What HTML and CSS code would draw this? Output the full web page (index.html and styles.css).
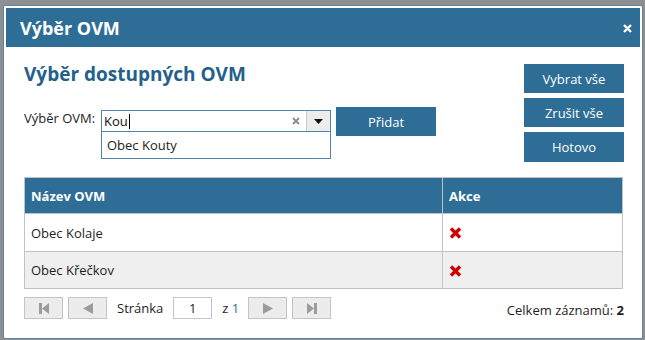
FILE: index.html
```html
<!DOCTYPE html>
<html lang="cs">
<head>
<meta charset="utf-8">
<title>Výběr OVM</title>
<link rel="stylesheet" href="styles.css">
</head>
<body>
<div class="dialog">
  <div class="titlebar">
    <span class="title">Výběr OVM</span>
    <svg class="close" width="9" height="9" viewBox="0 0 9 9"><path d="M1 1L8 8M8 1L1 8" stroke="#fff" stroke-width="2.4"/></svg>
  </div>
  <div class="content">
    <div class="top">
      <div class="left">
        <h2 class="heading">Výběr dostupných OVM</h2>
        <div class="formrow">
          <label class="label">Výběr OVM:</label>
          <div class="combo">
            <div class="combo-input">
              <span class="value">Kou<span class="caret-cursor"></span></span>
              <svg class="clear" width="8" height="8" viewBox="0 0 8 8"><path d="M1 1L7 7M7 1L1 7" stroke="#8a8a8a" stroke-width="1.8"/></svg>
              <span class="arrow"><svg width="9" height="5" viewBox="0 0 9 5"><path d="M0 0H9L4.5 5Z" fill="#111"/></svg></span>
            </div>
            <div class="dropdown">Obec Kouty</div>
          </div>
          <button class="btn add">Přidat</button>
        </div>
      </div>
      <div class="actions">
        <button class="btn">Vybrat vše</button>
        <button class="btn">Zrušit vše</button>
        <button class="btn">Hotovo</button>
      </div>
    </div>
    <table class="grid">
      <thead>
        <tr><th class="c-name">Název OVM</th><th class="c-act">Akce</th></tr>
      </thead>
      <tbody>
        <tr><td>Obec Kolaje</td><td><svg class="del" width="13" height="12" viewBox="0 0 13 12"><path d="M2 1.5L11 10.5M11 1.5L2 10.5" stroke="#d10000" stroke-width="3.4"/></svg></td></tr>
        <tr class="alt"><td>Obec Křečkov</td><td><svg class="del" width="13" height="12" viewBox="0 0 13 12"><path d="M2 1.5L11 10.5M11 1.5L2 10.5" stroke="#d10000" stroke-width="3.4"/></svg></td></tr>
      </tbody>
    </table>
    <div class="pager">
      <div class="pages">
        <span class="pbtn"><svg width="10" height="11" viewBox="0 0 10 11"><rect x="0" y="0" width="3" height="11" fill="#9c9c9c"/><path d="M10 0V11L3 5.5Z" fill="#9c9c9c"/></svg></span>
        <span class="pbtn"><svg width="10" height="11" viewBox="0 0 10 11"><path d="M10 0V11L0 5.5Z" fill="#9c9c9c"/></svg></span>
        <span class="ptext p-label">Stránka</span>
        <span class="pinput">1</span>
        <span class="ptext p-of">z <span class="link">1</span></span>
        <span class="pbtn"><svg width="10" height="11" viewBox="0 0 10 11"><path d="M0 0V11L10 5.5Z" fill="#9c9c9c"/></svg></span>
        <span class="pbtn"><svg width="10" height="11" viewBox="0 0 10 11"><path d="M0 0V11L7 5.5Z" fill="#9c9c9c"/><rect x="7" y="0" width="3" height="11" fill="#9c9c9c"/></svg></span>
      </div>
      <div class="total">Celkem záznamů: <b>2</b></div>
    </div>
  </div>
</div>
</body>
</html>
```
FILE: styles.css
```css
* { box-sizing: border-box; }
html, body { margin: 0; padding: 0; }
body {
  background: #8f8f8f;
  padding: 5px 2px 0 3px;
  font-family: "Open Sans", "Noto Sans", sans-serif;
  font-size: 13px;
  color: #1e1e1e;
  height: 340px;
  overflow: hidden;
}
.dialog {
  width: 640px;
  height: 334px;
  background: #fff;
  border: 1px solid #5a84a6;
  border-radius: 2px;
  padding: 2px;
}
.titlebar {
  height: 39px;
  background: #2e6e96;
  display: flex;
  align-items: center;
  justify-content: space-between;
  padding: 0 8px 0 14px;
}
.title {
  color: #fff;
  font-weight: 700;
  font-size: 18px;
  line-height: 24px;
  margin-top: 1px;
}
.close { margin-top: 1px; }
.content {
  padding: 17px 16px 0 18px;
}
.top {
  display: flex;
  justify-content: space-between;
}
.heading {
  margin: 0;
  font-size: 19px;
  line-height: 20px;
  font-weight: 700;
  color: #255f8c;
}
.formrow {
  display: flex;
  align-items: flex-start;
  margin-top: 23px;
}
.label {
  line-height: 18px;
  margin-top: 2px;
  width: 72px;
}
.combo {
  position: relative;
  margin-left: 5px;
  margin-top: 3px;
  width: 230px;
}
.combo-input {
  height: 22px;
  border: 1px solid #4f87b4;
  display: flex;
  align-items: center;
}
.value {
  flex: 1;
  padding-left: 2px;
  line-height: 20px;
  font-size: 13px;
  color: #111;
  display: flex;
  align-items: center;
}
.caret-cursor {
  display: inline-block;
  width: 1px;
  height: 15px;
  background: #000;
  margin-left: 1px;
}
.clear { margin-right: 6px; }
.arrow {
  width: 24px;
  height: 20px;
  background: #ececec;
  border-left: 1px solid #c9c9c9;
  display: flex;
  align-items: center;
  justify-content: center;
}
.dropdown {
  position: absolute;
  left: 0;
  top: 22px;
  width: 230px;
  height: 27px;
  border: 1px solid #4f87b4;
  border-top: none;
  background: #fff;
  padding-left: 5px;
  line-height: 27px;
  color: #222;
}
.btn {
  width: 100px;
  height: 29px;
  background: #2e6e96;
  color: #fff;
  border: none;
  padding: 0;
  font-family: "Open Sans", "Noto Sans", sans-serif;
  font-size: 13px;
}
.add { margin-left: 5px; }
.actions {
  display: flex;
  flex-direction: column;
  gap: 5px;
}
.actions .btn:last-child { height: 30px; }
.grid {
  margin-top: 15px;
  width: 599px;
  border-collapse: collapse;
}
.grid th, .grid td {
  border: 1px solid #c3c3c3;
  text-align: left;
  padding: 0 0 0 6px;
}
.grid th {
  background: #2e6e96;
  color: #fff;
  font-weight: 700;
  height: 36px;
}
.c-name { width: 418px; }
.grid td { height: 38px; }
.grid tr.alt td { background: #efefef; height: 37px; }
.del { display: block; margin-top: 1px; }
.pager {
  margin-top: 8px;
  display: flex;
  justify-content: space-between;
  align-items: center;
}
.pages {
  display: flex;
  align-items: center;
  gap: 5px;
}
.pbtn {
  width: 39px;
  height: 22px;
  background: #ececec;
  border: 1px solid #c4c4c4;
  display: flex;
  align-items: center;
  justify-content: center;
}
.p-label { margin-left: 5px; }
.p-of { margin-left: 5px; margin-right: 4px; }
.pinput {
  width: 39px;
  height: 22px;
  border: 1px solid #c4c4c4;
  display: flex;
  align-items: center;
  justify-content: center;
  margin-left: 5px;
}
.link { color: #2e6e96; }
.total { color: #1e1e1e; margin-top: 4px; }
.total b { font-weight: 700; }
```
